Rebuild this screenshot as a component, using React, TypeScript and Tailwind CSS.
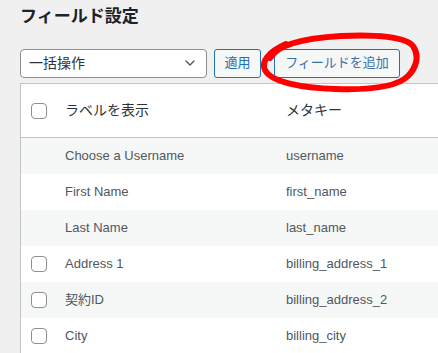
import { ChevronDown } from "lucide-react";

const rows = [
  { label: "Choose a Username", meta: "username", check: false },
  { label: "First Name", meta: "first_name", check: false },
  { label: "Last Name", meta: "last_name", check: false },
  { label: "Address 1", meta: "billing_address_1", check: true },
  { label: "契約ID", meta: "billing_address_2", check: true },
  { label: "City", meta: "billing_city", check: true },
];

function Box() {
  return <span className="block w-4 h-4 rounded-[4px] border border-[#8c8f94] bg-white" />;
}

export default function App() {
  return (
    <div
      className="w-[438px] h-[353px] overflow-hidden bg-[#f0f0f1] text-[#3c434a]"
      style={{ fontFamily: '"Liberation Sans", "Noto Sans CJK JP", sans-serif' }}
    >
      {/* Title */}
      <h1 className="pl-5 pt-[5px] h-[48px] text-[17px] font-bold text-[#1d2327] leading-[24px]">
        フィールド設定
      </h1>

      {/* Bulk actions */}
      <div className="relative flex items-center pl-5 h-[30px]">
        <div className="flex items-center justify-between w-[187px] h-[29px] rounded-[4px] border border-[#8c8f94] bg-white pl-2 pr-2 text-[14px] text-[#2c3338]">
          <span>一括操作</span>
          <ChevronDown size={16} strokeWidth={2} className="text-[#50575e]" />
        </div>
        <button className="ml-[7px] w-[47px] h-[29px] rounded-[3px] border border-[#2271b1] bg-[#f6f7f7] text-[13px] text-[#2271b1]">
          適用
        </button>
        <button className="ml-[13px] w-[126px] h-[29px] rounded-[3px] border border-[#2271b1] bg-[#f6f7f7] text-[13px] text-[#3b6fa8]">
          フィールドを追加
        </button>

        {/* hand-drawn red circle */}
        <svg
          className="absolute left-[256px] top-[-16px] pointer-events-none"
          width="170"
          height="62"
          viewBox="0 0 170 62"
        >
          <path
            d="M14 26 C 22 12, 50 6, 85 4 C 120 2, 150 5, 157 14 C 164 24, 160 36, 152 44 C 140 56, 110 58, 80 57 C 45 56, 15 50, 9 38 C 5 30, 12 20, 30 12"
            fill="none"
            stroke="#ff0000"
            strokeWidth="6"
            strokeLinecap="round"
            strokeLinejoin="round"
          />
        </svg>
      </div>

      {/* Table */}
      <div className="ml-5 mt-[5px] w-[440px] border border-[#c3c4c7] bg-white">
        <div className="flex items-center h-[54px] border-b border-[#c3c4c7] text-[14px] text-[#2c3338]">
          <div className="w-[34px] pl-[10px]">
            <Box />
          </div>
          <div className="w-[221px] pl-[10px]">ラベルを表示</div>
          <div className="pl-[10px]">メタキー</div>
        </div>
        {rows.map((r, i) => (
          <div
            key={r.meta}
            className={`flex items-center h-[36px] text-[13px] text-[#50575e] ${
              i % 2 === 0 ? "bg-[#f6f7f7]" : "bg-white"
            }`}
          >
            <div className="w-[34px] pl-[10px]">{r.check && <Box />}</div>
            <div className="w-[221px] pl-[10px]">{r.label}</div>
            <div className="pl-[10px]">{r.meta}</div>
          </div>
        ))}
      </div>
    </div>
  );
}
